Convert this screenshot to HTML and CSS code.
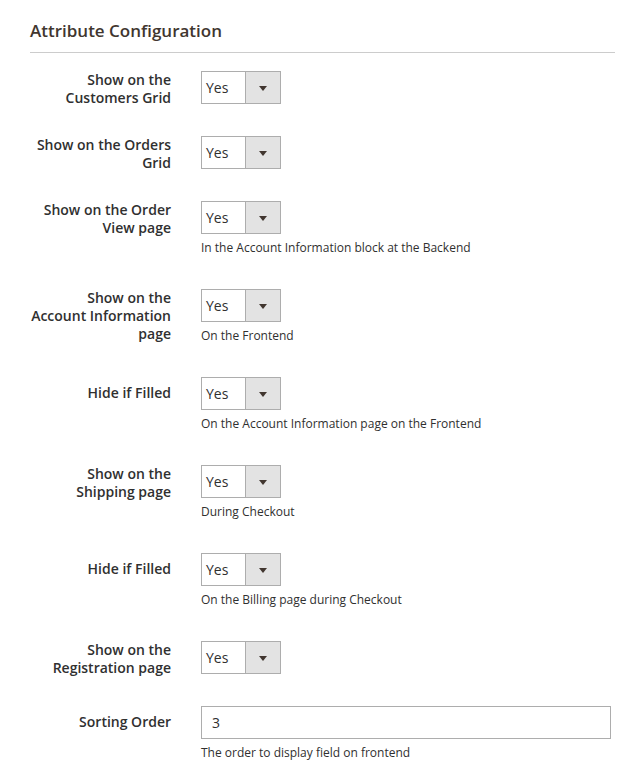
FILE: index.html
```html
<!DOCTYPE html>
<html lang="en">
  <head>
    <meta charset="UTF-8" />
    <meta name="viewport" content="width=device-width, initial-scale=1.0" />
    <title>Attribute Configuration</title>
    <link rel="stylesheet" href="styles.css">
  </head>
  <body>
    <div class="section">
      <h2 class="sectionTitle">Attribute Configuration</h2>
      <div class="fields">
        <div class="field">
          <label class="label">Show on the<br>Customers Grid</label>
          <div class="select"><span class="value">Yes</span><span class="button"></span></div>
        </div>
        <div class="field">
          <label class="label">Show on the Orders<br>Grid</label>
          <div class="select"><span class="value">Yes</span><span class="button"></span></div>
        </div>
        <div class="field">
          <label class="label">Show on the Order<br>View page</label>
          <div class="select"><span class="value">Yes</span><span class="button"></span></div>
          <div class="note">In the Account Information block at the Backend</div>
        </div>
        <div class="field">
          <label class="label">Show on the<br>Account Information<br>page</label>
          <div class="select"><span class="value">Yes</span><span class="button"></span></div>
          <div class="note">On the Frontend</div>
        </div>
        <div class="field">
          <label class="label oneLine">Hide if Filled</label>
          <div class="select"><span class="value">Yes</span><span class="button"></span></div>
          <div class="note">On the Account Information page on the Frontend</div>
        </div>
        <div class="field">
          <label class="label">Show on the<br>Shipping page</label>
          <div class="select"><span class="value">Yes</span><span class="button"></span></div>
          <div class="note">During Checkout</div>
        </div>
        <div class="field">
          <label class="label oneLine">Hide if Filled</label>
          <div class="select"><span class="value">Yes</span><span class="button"></span></div>
          <div class="note">On the Billing page during Checkout</div>
        </div>
        <div class="field">
          <label class="label">Show on the<br>Registration page</label>
          <div class="select"><span class="value">Yes</span><span class="button"></span></div>
        </div>
        <div class="field">
          <label class="label oneLine">Sorting Order</label>
          <div class="input">3</div>
          <div class="note">The order to display field on frontend</div>
        </div>
      </div>
    </div>
  </body>
</html>
```

FILE: styles.css
```css
body {
  margin: 0;
  font-family: "Open Sans", "Liberation Sans", sans-serif;
  background-color: white;
  color: #303030;
}

.section {
  padding: 20px 22px 0 30px;
}
.sectionTitle {
  margin: 0;
  padding-bottom: 10px;
  border-bottom: 1px solid #cccccc;
  font-size: 17px;
  line-height: 22px;
  font-weight: 600;
  color: #41362f;
}

.fields {
  margin-top: 18px;
}
.field {
  display: grid;
  grid-template-columns: 141px 1fr;
  column-gap: 30px;
  align-items: start;
  margin-bottom: 29px;
}
.label {
  grid-column: 1;
  grid-row: 1 / span 2;
  text-align: right;
  font-size: 14px;
  line-height: 18px;
  font-weight: 600;
  color: #303030;
}
.label.oneLine {
  padding-top: 7px;
}

.select {
  grid-column: 2;
  display: flex;
  width: 80px;
  height: 33px;
  box-sizing: border-box;
  border: 1px solid #adadad;
  font-size: 14px;
}
.select .value {
  flex: 1;
  padding-left: 4px;
  line-height: 31px;
}
.select .button {
  width: 34px;
  border-left: 1px solid #adadad;
  background-color: #e3e3e3;
  position: relative;
}
.select .button::after {
  content: "";
  position: absolute;
  left: 13px;
  top: 14px;
  border-left: 4px solid transparent;
  border-right: 4px solid transparent;
  border-top: 5px solid #41362f;
}

.input {
  grid-column: 2;
  height: 33px;
  box-sizing: border-box;
  border: 1px solid #adadad;
  padding-left: 10px;
  font-size: 14px;
  line-height: 31px;
  margin-right: 4px;
}

.note {
  grid-column: 2;
  margin-top: 5px;
  margin-bottom: 3px;
  font-size: 12px;
  line-height: 18px;
  color: #303030;
}
```
